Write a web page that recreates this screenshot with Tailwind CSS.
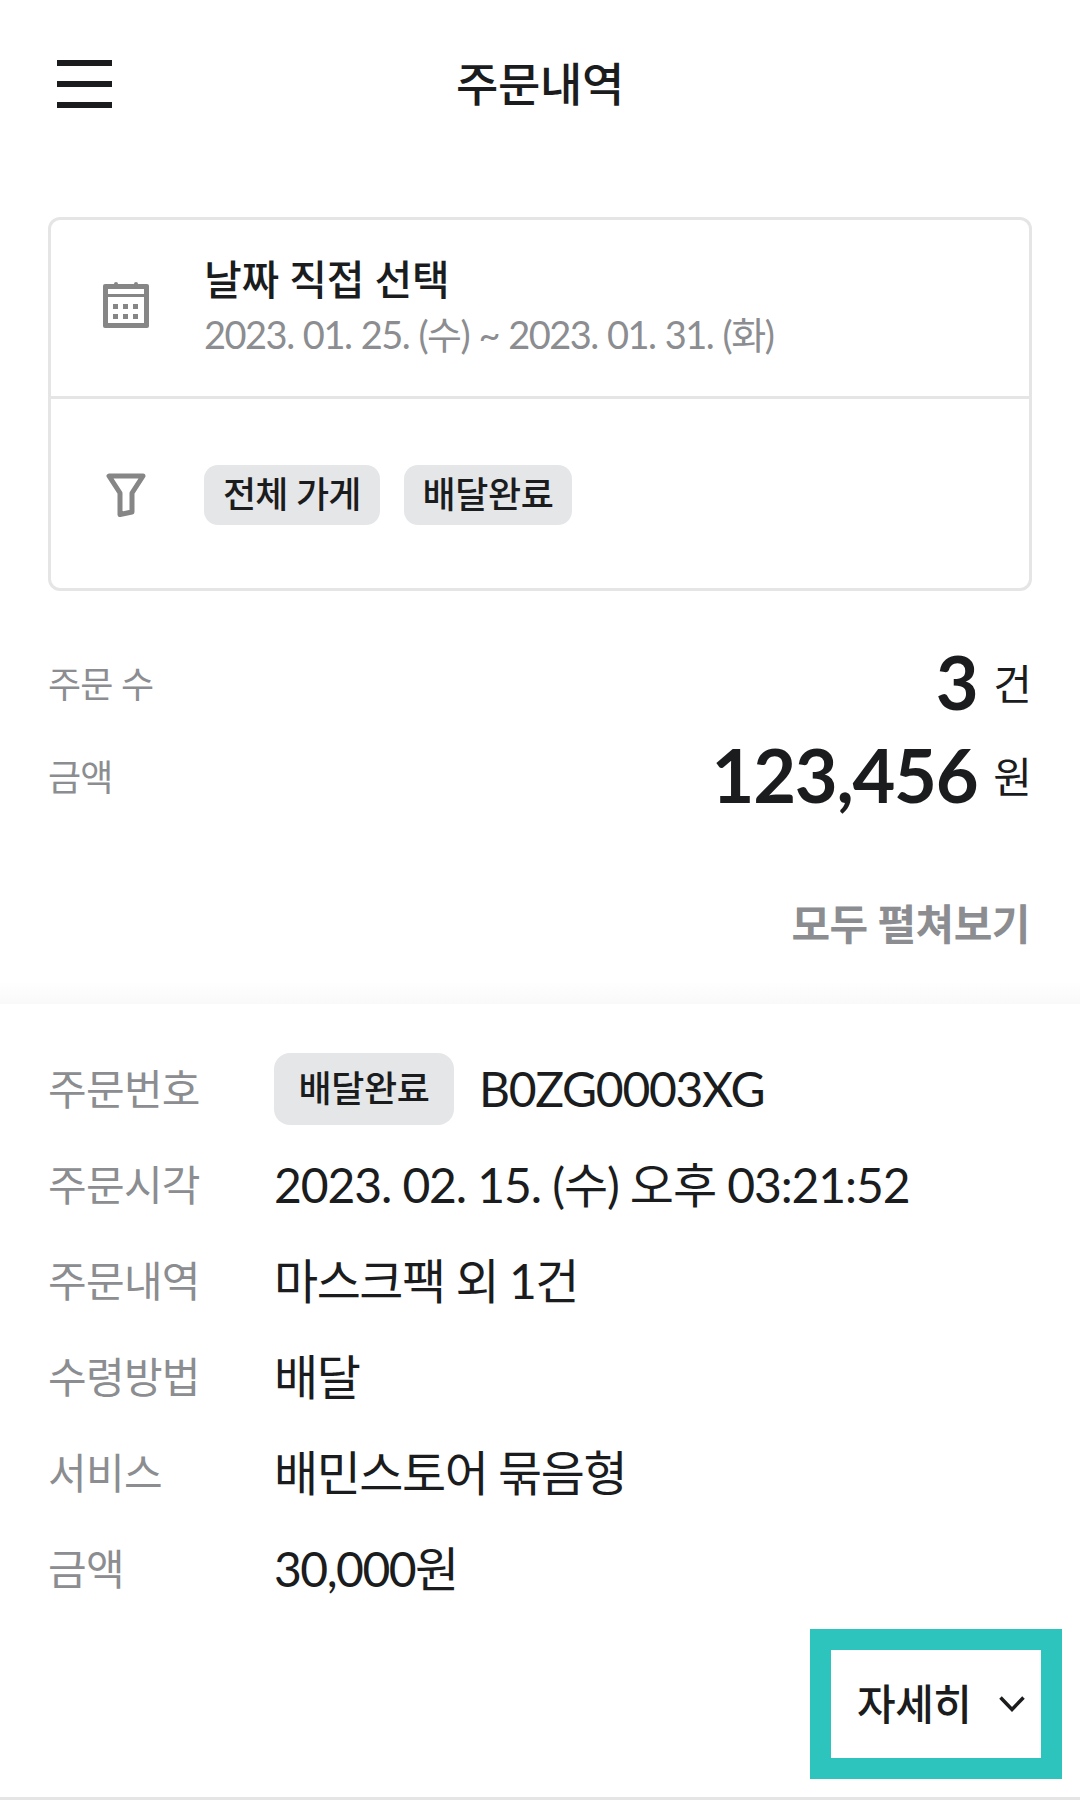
<!DOCTYPE html>
<html lang="ko">
<head>
    <meta charset="UTF-8">
    <meta name="viewport" content="width=device-width, initial-scale=1.0">
    <title>주문내역</title>
    <script src="https://cdn.jsdelivr.net/npm/@tailwindcss/browser@4"></script>
</head>
<body class="bg-white">
    <div class="w-[1080px] h-[1800px] flex flex-col overflow-hidden text-[#1b1c1e] font-['Lato','Noto_Sans_CJK_KR',sans-serif]">
        <!-- Header -->
        <header class="h-[168px] shrink-0 grid grid-cols-[1fr_auto_1fr] items-center px-[57px]">
            <div class="w-[55px] flex flex-col gap-[15px]">
                <span class="block h-[6px] bg-[#1b1c1e]"></span>
                <span class="block h-[6px] bg-[#1b1c1e]"></span>
                <span class="block h-[6px] bg-[#1b1c1e]"></span>
            </div>
            <h1 class="text-[46px] leading-[60px] font-medium tracking-[-0.3px]">주문내역</h1>
            <div></div>
        </header>

        <!-- Filter card -->
        <section class="mt-[49px] mx-[48px] h-[374px] shrink-0 border-[3px] border-[#e5e5e5] rounded-[12px] flex flex-col">
            <div class="h-[176px] flex items-center pl-[52px]">
                <svg class="w-[46px] h-[46px] shrink-0 mb-[6px]" viewBox="0 0 46 46" fill="none">
                    <rect x="0" y="2" width="46" height="44" rx="2" fill="#868686"/>
                    <rect x="11" y="0" width="4" height="6" rx="2" fill="#868686"/>
                    <rect x="31" y="0" width="4" height="6" rx="2" fill="#868686"/>
                    <rect x="5" y="7" width="36" height="5" fill="#fff"/>
                    <rect x="5" y="15" width="36" height="26" fill="#fff"/>
                    <g fill="#868686">
                        <rect x="10" y="22" width="5" height="5"/><rect x="20" y="22" width="5" height="5"/><rect x="30" y="22" width="5" height="5"/>
                        <rect x="10" y="32" width="5" height="5"/><rect x="20" y="32" width="5" height="5"/><rect x="30" y="32" width="5" height="5"/>
                    </g>
                </svg>
                <div class="ml-[55px] pb-[2px] flex flex-col">
                    <p class="text-[41px] leading-[54px] font-medium tracking-[-0.2px]">날짜 직접 선택</p>
                    <p class="text-[38px] leading-[54px] text-[#8b8d90] tracking-[-1.5px] [word-spacing:1px]">2023. 01. 25. (수) ~ 2023. 01. 31. (화)</p>
                </div>
            </div>
            <div class="h-[3px] bg-[#e5e5e5] -mx-[3px]"></div>
            <div class="flex-1 flex items-center pl-[55px]">
                <svg class="w-[40px] h-[44px] shrink-0 mt-[3px]" viewBox="0 0 40 44" fill="none">
                    <path d="M3 3H37L26 20V39L14 41.500V20z" stroke="#868686" stroke-width="5" stroke-linejoin="round"/>
                </svg>
                <div class="ml-[58px] flex gap-[24px] mt-[3px]">
                    <span class="h-[60px] px-[19px] pb-[3px] rounded-[14px] bg-[#e5e6e8] flex items-center text-[36px] font-medium tracking-[-0.8px]">전체 가게</span>
                    <span class="h-[60px] px-[19px] pb-[3px] rounded-[14px] bg-[#e5e6e8] flex items-center text-[36px] font-medium tracking-[-0.4px]">배달완료</span>
                </div>
            </div>
        </section>

        <!-- Totals -->
        <section class="mt-[43px] px-[48px] flex flex-col">
            <div class="h-[100px] flex items-center justify-between">
                <span class="text-[36px] text-[#8b8d90] tracking-[-0.8px]">주문 수</span>
                <span class="flex items-center gap-[16px]"><b class="text-[74px] leading-[100px] font-bold tracking-[-1.3px] pb-[5px]">3</b><span class="text-[42px] leading-[56px]">건</span></span>
            </div>
            <div class="h-[86px] flex items-center justify-between">
                <span class="text-[36px] text-[#8b8d90] tracking-[-0.8px]">금액</span>
                <span class="flex items-center gap-[16px]"><b class="text-[74px] leading-[86px] font-bold tracking-[-1.3px] pb-[5px]">123,456</b><span class="text-[42px] leading-[56px]">원</span></span>
            </div>
        </section>
        <div class="mt-[77px] px-[50px] text-right text-[42px] leading-[54px] font-bold text-[#8b8d90] tracking-[-0.5px]">모두 펼쳐보기</div>
        <div class="mt-[29px] h-[24px] shrink-0 bg-gradient-to-b from-white to-[#f9f9f9]"></div>

        <!-- Order -->
        <section class="flex-1 border-b-[3px] border-[#e5e5e5] flex flex-col pt-[37px]">
            <div class="px-[48px] grid grid-cols-[226px_1fr] auto-rows-[96px] items-center">
                <span class="text-[42px] text-[#8b8d90] tracking-[-0.7px]">주문번호</span>
                <span class="flex items-center gap-[25px] text-[48px] tracking-[-1.3px]">
                    <span class="h-[72px] w-[180px] pb-[3px] rounded-[16px] bg-[#e5e6e8] flex items-center justify-center text-[36px] font-medium tracking-[-0.4px]">배달완료</span>
                    <span>B0ZG0003XG</span>
                </span>
                <span class="text-[42px] text-[#8b8d90] tracking-[-0.7px]">주문시각</span><span class="text-[48px] tracking-[-1.1px]">2023. 02. 15. (수) 오후 03:21:52</span>
                <span class="text-[42px] text-[#8b8d90] tracking-[-0.7px]">주문내역</span><span class="text-[48px] tracking-[-1.5px]">마스크팩 외 1건</span>
                <span class="text-[42px] text-[#8b8d90] tracking-[-0.7px]">수령방법</span><span class="text-[48px] tracking-[-1.5px]">배달</span>
                <span class="text-[42px] text-[#8b8d90] tracking-[-0.7px]">서비스</span><span class="text-[48px] tracking-[-1.5px]">배민스토어 묶음형</span>
                <span class="text-[42px] text-[#8b8d90] tracking-[-0.7px]">금액</span><span class="text-[48px] tracking-[-1.5px]">30,000원</span>
            </div>
            <div class="mt-[12px] mr-[18px] self-end w-[252px] h-[150px] border-[21px] border-[#2cc4bc] bg-white flex items-center pl-[26px]">
                <span class="text-[42px] font-medium tracking-[-0.5px]">자세히</span>
                <svg class="ml-[28px] w-[26px] h-[16px]" viewBox="0 0 26 16" fill="none"><path d="M1.500 1.500L13 13.500L24.500 1.500" stroke="#1b1c1e" stroke-width="3.500"/></svg>
            </div>
        </section>
    </div>
</body>
</html>
